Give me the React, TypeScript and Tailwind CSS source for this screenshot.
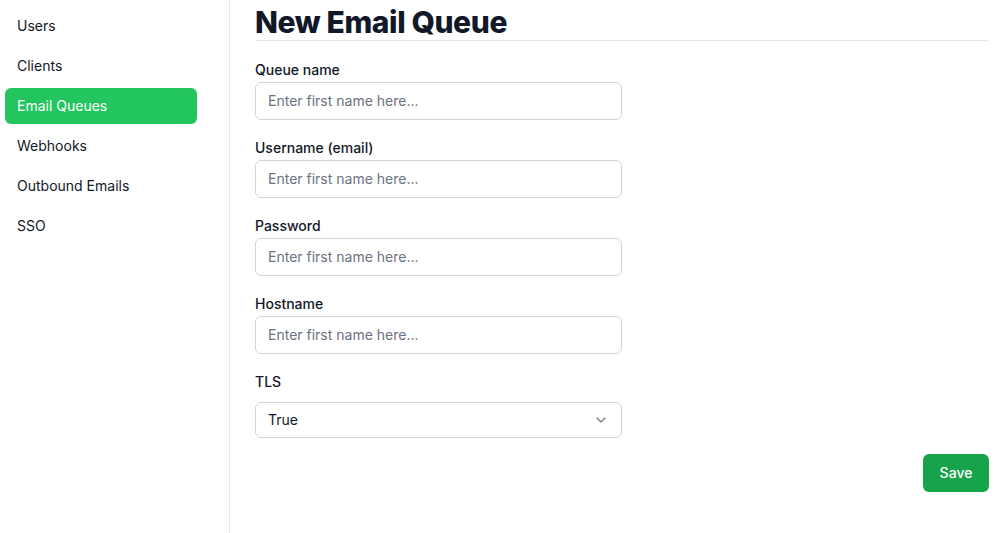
import { ChevronDown } from 'lucide-react'

const NAV = ['Users', 'Clients', 'Email Queues', 'Webhooks', 'Outbound Emails', 'SSO']
const ACTIVE = 'Email Queues'

const FIELDS = ['Queue name', 'Username (email)', 'Password', 'Hostname']

export default function App() {
  return (
    <div className="flex min-h-screen bg-white text-[#111827]" style={{ fontFamily: 'Inter, "Noto Sans", sans-serif' }}>
      {/* Sidebar */}
      <aside className="w-[230px] shrink-0 border-r border-[#e5e7eb] pt-2 pl-[5px]">
        <nav className="flex flex-col gap-1">
          {NAV.map(item => (
            <a
              key={item}
              href="#"
              className={`flex h-9 w-[192px] items-center rounded-md px-3 text-sm ${
                item === ACTIVE ? 'bg-[#22c55e] text-white' : 'text-[#111827]'
              }`}
            >
              {item}
            </a>
          ))}
        </nav>
      </aside>

      {/* Main */}
      <main className="flex-1 pl-[25px] pr-[10px] pt-1">
        <h1 className="border-b border-[#e5e7eb] text-3xl font-extrabold leading-9 tracking-[-0.4px]">New Email Queue</h1>

        <form className="mt-[19px] flex flex-col">
          {FIELDS.map(label => (
            <div key={label} className="mb-[18px] flex flex-col">
              <label className="mb-0.5 text-sm font-medium leading-5">{label}</label>
              <input
                type={label === 'Password' ? 'password' : 'text'}
                placeholder="Enter first name here..."
                className="w-[367px] rounded-md border border-[#d1d5db] px-3 py-2 text-sm leading-5 placeholder:text-[#6b7280] focus:outline-none"
              />
            </div>
          ))}

          <div className="flex flex-col">
            <label className="mb-2.5 text-sm font-medium leading-5">TLS</label>
            <div className="relative w-[367px]">
              <select className="h-9 w-full appearance-none rounded-md border border-[#d1d5db] bg-white px-3 text-sm text-[#111827] focus:outline-none">
                <option>True</option>
                <option>False</option>
              </select>
              <ChevronDown className="pointer-events-none absolute right-[13px] top-1/2 h-4 w-4 -translate-y-1/2 text-[#6b7280]" strokeWidth={1.75} />
            </div>
          </div>

          <div className="mt-4 flex justify-end">
            <button type="button" className="w-[66px] rounded-md bg-[#16a34a] py-[9px] text-center text-sm font-medium leading-5 text-white">
              Save
            </button>
          </div>
        </form>
      </main>
    </div>
  )
}
